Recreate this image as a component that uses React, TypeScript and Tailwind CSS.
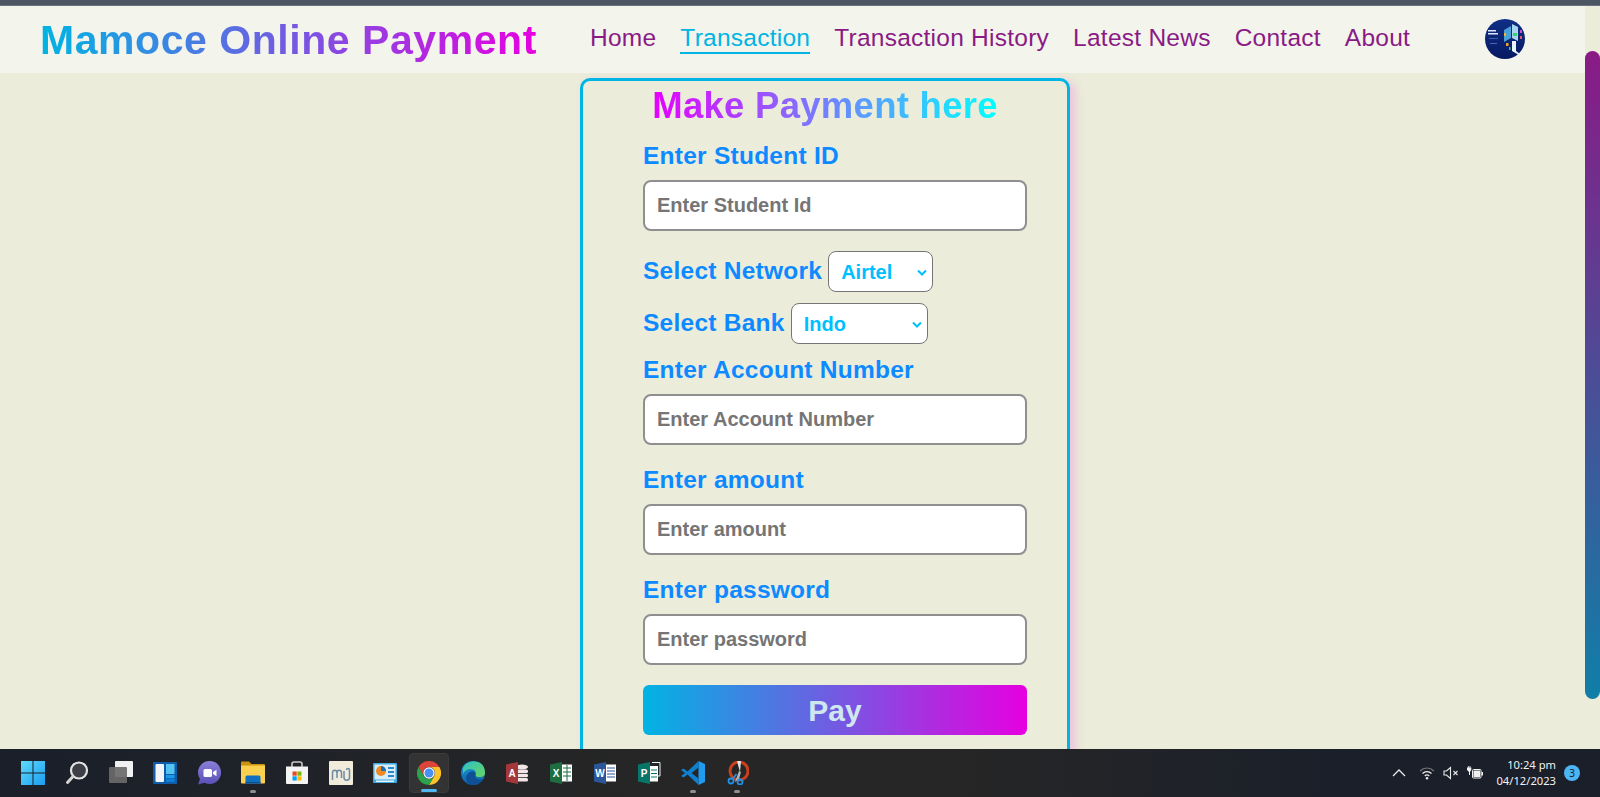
import React from "react";

const sans = "font-['Liberation_Sans',Arial,sans-serif]";

function Field({ label, placeholder, top }: { label: string; placeholder: string; top: string }) {
  return (
    <div className={top}>
      <label className="block h-7 text-[24.5px] leading-7 font-bold tracking-[0.25px] text-[#0d8aff]">{label}</label>
      <input
        readOnly
        placeholder={placeholder}
        className="mt-[10px] block h-[51px] w-[384px] rounded-lg border-2 border-[#8f8f8f] bg-white pl-3 text-xl font-bold outline-none placeholder:text-[#757575]"
      />
    </div>
  );
}

function SelectRow({ label, value, width, top }: { label: string; value: string; width: string; top: string }) {
  return (
    <div className={`flex h-[41px] items-center gap-[6px] ${top}`}>
      <span className="pb-[2px] text-[24.5px] leading-7 font-bold tracking-[0.25px] text-[#0d8aff]">{label}</span>
      <span className={`flex h-[41px] items-center justify-between rounded-lg border border-[#767676] bg-white pr-[4px] pl-3 text-xl font-bold text-[#00bfff] ${width}`}>
        {value}
        <svg width="12" height="12" viewBox="0 0 12 12" fill="none" stroke="#00bfff" strokeWidth="2">
          <path d="M2 4.5 6 8.5 10 4.5" />
        </svg>
      </span>
    </div>
  );
}

const Slot = ({ children, cls = "" }: { children: React.ReactNode; cls?: string }) => (
  <div className={`relative flex h-10 w-10 items-center justify-center rounded ${cls}`}>{children}</div>
);
const Dot = ({ cls = "w-[6px] bg-[#8f8f8f]" }: { cls?: string }) => (
  <span className={`absolute bottom-0 left-1/2 h-[3px] -translate-x-1/2 rounded-full ${cls}`} />
);

const WindowsIcon = () => (
  <svg width="24" height="24" viewBox="0 0 24 24">
    <defs><linearGradient id="w" x1="0" y1="0" x2="1" y2="1"><stop offset="0" stopColor="#5fdcfb" /><stop offset="1" stopColor="#1a9df0" /></linearGradient></defs>
    <path fill="url(#w)" d="M0 0h11.5v11.5H0zM12.5 0H24v11.5H12.5zM0 12.5h11.5V24H0zM12.5 12.5H24V24H12.5z" />
  </svg>
);
const SearchIcon = () => (
  <svg width="24" height="24" viewBox="0 0 24 24" fill="none">
    <circle cx="14" cy="9.5" r="8" fill="#3c3f45" stroke="#e4e4e4" strokeWidth="2.2" />
    <path d="M8 15.5 2.5 21.5" stroke="#d5d5d5" strokeWidth="3" strokeLinecap="round" />
  </svg>
);
const TaskViewIcon = () => (
  <svg width="24" height="24" viewBox="0 0 24 24">
    <rect x="6" y="0" width="18" height="16" rx="1" fill="#f0f0f0" />
    <rect x="0" y="6" width="18" height="16" rx="1" fill="#6a6a6a" fillOpacity="0.92" />
  </svg>
);
const WidgetsIcon = () => (
  <svg width="24" height="24" viewBox="0 0 24 24">
    <rect width="24" height="22" y="1" rx="1" fill="#0f5ca8" />
    <rect x="2.5" y="3" width="8.5" height="18" rx="1" fill="#f2f4f7" />
    <rect x="13" y="3" width="8.5" height="10" fill="#55c3f2" />
    <rect x="13" y="14" width="8.5" height="3" fill="#1a9ae8" />
    <rect x="13" y="17.5" width="8.5" height="3.5" fill="#0f7ed6" />
  </svg>
);
const ChatIcon = () => (
  <svg width="24" height="24" viewBox="0 0 24 24">
    <defs><linearGradient id="c" x1="0" y1="0" x2="0" y2="1"><stop offset="0" stopColor="#8a80d8" /><stop offset="1" stopColor="#5b4fb8" /></linearGradient></defs>
    <path fill="url(#c)" d="M12.5 0a11.5 11.5 0 1 1-5 21.8L1 23.5l2-5.6A11.5 11.5 0 0 1 12.5 0Z" />
    <rect x="6.5" y="8" width="8.5" height="8" rx="1.6" fill="#fff" />
    <path d="m16 11 3.5-2.2v6.400L16 13z" fill="#fff" />
  </svg>
);
const FolderIcon = () => (
  <svg width="24" height="24" viewBox="0 0 24 24">
    <path d="M0 1.500a1 1 0 0 1 1-1h7l2.500 2.500H23a1 1 0 0 1 1 1V8H0z" fill="#c9920f" />
    <path d="M0 4.500h24V21.500a1 1 0 0 1-1 1H1a1 1 0 0 1-1-1z" fill="#fbd04e" />
    <path d="M4.500 16a1.500 1.500 0 0 1 1.500-1.500h12a1.500 1.500 0 0 1 1.500 1.500v6.500h-15z" fill="#0f6fc0" />
    <path d="M4.500 21h15v1.500h-15z" fill="#0a4f94" />
  </svg>
);
const StoreIcon = () => (
  <svg width="24" height="24" viewBox="0 0 24 24">
    <path d="M7 6V3a2 2 0 0 1 2-2h6a2 2 0 0 1 2 2v3" fill="none" stroke="#c9c9c9" strokeWidth="1.6" />
    <path d="M1 5.500h22V22a1 1 0 0 1-1 1H2a1 1 0 0 1-1-1z" fill="#f4f4f4" />
    <path d="M7.500 10.500h4.200v4.200H7.500z" fill="#e8491f" />
    <path d="M12.300 10.500h4.200v4.200h-4.200z" fill="#7db900" />
    <path d="M7.500 15.300h4.200v4.200H7.500z" fill="#00a1f1" />
    <path d="M12.300 15.300h4.200v4.200h-4.200z" fill="#ffb900" />
  </svg>
);
const MuIcon = () => (
  <svg width="24" height="24" viewBox="0 0 24 24" fill="none">
    <rect width="24" height="24" rx="1" fill="#f1ebdc" />
    <path d="M3.500 19v-7c0-3.600 4.500-3.600 4.500 0v5m0-5c0-3.600 4.500-3.600 4.500 0v5" stroke="#6d8ba3" strokeWidth="1.500" />
    <path d="M15 10v6.500c0 3.600 5.500 3.600 5.500 0V9M17.500 9a1.500 1.500 0 1 1 3 0" stroke="#6d8ba3" strokeWidth="1.500" />
  </svg>
);
const PanelIcon = () => (
  <svg width="24" height="24" viewBox="0 0 24 24">
    <rect y="2" width="24" height="20" rx="1" fill="#3fa9e0" />
    <rect x="1.500" y="3.500" width="21" height="15" fill="#d7eef9" />
    <circle cx="8" cy="10" r="5" fill="#f08a24" />
    <path d="M8 10V5a5 5 0 0 1 5 5z" fill="#1f6fb8" />
    <path d="M15 6h6v2h-6zM15 10h6v2h-6zM15 14h6v2h-6z" fill="#2c86c8" />
    <path d="M3 19.500h18V21H3z" fill="#e6f5fc" />
  </svg>
);
const ChromeIcon = () => (
  <svg width="24" height="24" viewBox="0 0 24 24">
    <path d="M1.600 6A12 12 0 0 1 22.400 6H12A6 6 0 0 0 6.800 15z" fill="#e0433a" />
    <path d="M22.400 6A12 12 0 0 1 12 24l5.200-9A6 6 0 0 0 12 6z" fill="#fbc327" />
    <path d="M12 24A12 12 0 0 1 1.600 6l5.200 9A6 6 0 0 0 17.200 15z" fill="#2ba24c" />
    <circle cx="12" cy="12" r="5.700" fill="#fff" />
    <circle cx="12" cy="12" r="4.500" fill="#4a90f0" />
  </svg>
);
const EdgeIcon = () => (
  <svg width="24" height="24" viewBox="0 0 24 24">
    <defs>
      <linearGradient id="e1" x1="0" y1="0" x2="0" y2="1"><stop offset="0" stopColor="#1e9fd8" /><stop offset="1" stopColor="#0c5fa8" /></linearGradient>
      <linearGradient id="e2" x1="0" y1="0" x2="1" y2="1"><stop offset="0" stopColor="#2cc0c8" /><stop offset="1" stopColor="#6ad65c" /></linearGradient>
    </defs>
    <circle cx="12" cy="12" r="12" fill="url(#e1)" />
    <path d="M2 7C5 1 12-.5 17 1s7 6 7 11c0 3-3 4.500-6.500 4-2.500-.4-3.500-1.500-3-2.500 1-2-.5-5.500-4.500-5.500-3 0-6 1-8 5z" fill="url(#e2)" />
    <path d="M10 24c-4-2-6-6-4-10s7-5 8.500-2c.7 1.500-1 3 .5 5 1.500 1.800 4 1.700 7 1-3 5-7.500 7-12 6z" fill="#0e4f96" />
  </svg>
);
const OfficeIcon = ({ color, letter, page }: { color: string; letter: string; page: React.ReactNode }) => (
  <svg width="24" height="24" viewBox="0 0 24 24">
    {page}
    <path d="M1 3.500 13 1v22L1 20.500z" fill={color} />
    <text x="7" y="16" textAnchor="middle" fontSize="10" fontWeight="700" fill="#fff" fontFamily="Liberation Sans">{letter}</text>
  </svg>
);
const VsCodeIcon = () => (
  <svg width="24" height="24" viewBox="0 0 24 24">
    <path d="M17.500 0 24 3v18l-6.500 3V0z" fill="#1f9cf0" />
    <path d="M17.500 0 6.500 10.500 2.500 7.500 0 9l4 3-4 3 2.500 1.500 4-3L17.500 24v-6.500L10.500 12l7-5.500z" fill="#0f7fd0" />
  </svg>
);
const SnipIcon = () => (
  <svg width="24" height="24" viewBox="0 0 24 24" fill="none">
    <circle cx="14" cy="10" r="9" stroke="#c8401c" strokeWidth="3" />
    <path d="M12 0h4l-1 11z" fill="#e3e3e3" />
    <path d="m10 21 4-11 2 1-2 7z" fill="#b5b5b5" />
    <circle cx="6" cy="20" r="2.500" stroke="#1f90e8" strokeWidth="1.800" />
    <circle cx="15" cy="21" r="2.500" stroke="#1f90e8" strokeWidth="1.800" />
    <path d="m7.500 18 4-5" stroke="#1f90e8" strokeWidth="1.800" />
  </svg>
);

const Avatar = () => (
  <svg width="40" height="40" viewBox="0 0 40 40" className="shrink-0">
    <defs><linearGradient id="av" x1="0" y1="0" x2="0" y2="1"><stop offset="0" stopColor="#0f2f86" /><stop offset="1" stopColor="#071a63" /></linearGradient></defs>
    <circle cx="20" cy="20" r="20" fill="url(#av)" />
    <rect x="3" y="11" width="8" height="1.500" fill="#dfe8ff" />
    <rect x="3" y="14" width="10" height="1.500" fill="#dfe8ff" />
    <rect x="4" y="19" width="9" height="1" fill="#3a5cae" />
    <rect x="5" y="24" width="7" height="1" fill="#4467b8" />
    <path d="m19 11 7-4v12l-7 4z" fill="#4aa0d8" />
    <path d="m27 5 6 3v14l-6-3z" fill="#a7d3ef" />
    <rect x="28" y="14" width="4" height="3" fill="#3ecf7a" />
    <rect x="35" y="11" width="2" height="3" fill="#d447c8" />
    <rect x="35" y="17" width="2" height="3" fill="#e8556e" />
    <path d="M27 22h4v10l4 3-1 1-7-4z" fill="#eef4fb" />
    <rect x="19" y="14" width="2" height="3" fill="#f0b429" />
    <rect x="21" y="24" width="2.500" height="3" fill="#f0a12c" />
    <rect x="24" y="28" width="1.500" height="3" fill="#35d07f" />
  </svg>
);

export default function App() {
  return (
    <div className={`flex h-screen w-full flex-col overflow-hidden bg-[#ebecda] ${sans}`}>
      <div className="h-[6px] shrink-0 border-b border-b-[#6b7280] bg-[#4b5563]" />
      <div className="flex min-h-0 flex-1">
        <div className="min-w-0 flex-1">
          <header className="flex h-[67px] items-center bg-[#f3f4ec] pl-10">
            <h1 className="w-[497px] bg-[linear-gradient(to_right,#00b4e3,#e600e0)] bg-clip-text text-[41px] leading-[50px] font-bold tracking-[0.55px] whitespace-nowrap text-transparent">
              Mamoce Online Payment
            </h1>
            <nav className="mb-[2px] ml-[53px] flex w-[820px] items-center gap-6 text-[24.5px] tracking-[0.25px] whitespace-nowrap text-[#8a1a85]">
              <a>Home</a>
              <a className="border-b-2 border-[#00b4e3] leading-[29px] text-[#00b4e3]">Transaction</a>
              <a>Transaction History</a>
              <a>Latest News</a>
              <a>Contact</a>
              <a>About</a>
            </nav>
            <div className="mb-[1px] ml-[75px]"><Avatar /></div>
          </header>
          <main className="mt-[5px] ml-[580px] h-[900px] w-[490px] rounded-t-[10px] border-[3px] border-[#00b4e3] shadow-[5px_3px_10px_rgba(240,100,230,0.3)]">
            <h2 className="mx-auto h-[47px] w-fit bg-[linear-gradient(to_right,#e600ff,#00ffff)] bg-clip-text text-center text-[36.5px] leading-[50px] font-bold tracking-[0.28px] whitespace-nowrap text-transparent">
              Make Payment here
            </h2>
            <form className="ml-[60px] w-[384px]">
              <Field label="Enter Student ID" placeholder="Enter Student Id" top="mt-[14px]" />
              <SelectRow label="Select Network" value="Airtel" width="w-[105px]" top="mt-5" />
              <SelectRow label="Select Bank" value="Indo" width="w-[137px]" top="mt-[11px]" />
              <Field label="Enter Account Number" placeholder="Enter Account Number" top="mt-3" />
              <Field label="Enter amount" placeholder="Enter amount" top="mt-[21px]" />
              <Field label="Enter password" placeholder="Enter password" top="mt-[21px]" />
              <button type="button" className="mt-5 h-[50px] w-[384px] rounded-md bg-[linear-gradient(to_right,#00b4e3,#e600e0)] text-[30px] font-bold text-[#cfe8f0]">
                Pay
              </button>
            </form>
          </main>
        </div>
        <div className="w-[15px] shrink-0 pt-[45px]">
          <div className="h-[648px] rounded-full bg-[linear-gradient(to_bottom,#8a1a85,#0f7fa8)]" />
        </div>
      </div>
      <footer className="flex h-12 shrink-0 items-center bg-[linear-gradient(to_right,#1a1f2a,#262626_40%,#262626_60%,#1a1f2a_85%)] pl-[13px]">
        <div className="flex gap-1">
          <Slot><WindowsIcon /></Slot>
          <Slot><SearchIcon /></Slot>
          <Slot><TaskViewIcon /></Slot>
          <Slot><WidgetsIcon /></Slot>
          <Slot><ChatIcon /></Slot>
          <Slot><FolderIcon /><Dot /></Slot>
          <Slot><StoreIcon /></Slot>
          <Slot><MuIcon /></Slot>
          <Slot><PanelIcon /></Slot>
          <Slot cls="border border-[#3a3a3a] bg-[#333333]"><ChromeIcon /><Dot cls="w-4 bg-[#4fb6f0]" /></Slot>
          <Slot><EdgeIcon /></Slot>
          <Slot>
            <OfficeIcon color="#a4373a" letter="A" page={<g fill="#f4e6e6"><ellipse cx="17" cy="6" rx="6" ry="2.500" /><rect x="11" y="8.500" width="12" height="3.500" rx="1.500" /><rect x="11" y="12.800" width="12" height="3.500" rx="1.500" /><rect x="11" y="17" width="12" height="3.500" rx="1.500" /></g>} />
          </Slot>
          <Slot>
            <OfficeIcon color="#1d6f42" letter="X" page={<g><rect x="11" y="3.500" width="12" height="17" fill="#fff" /><path d="M14 7h8M14 11h8M14 15h8M18 4v16" stroke="#1d6f42" fill="none" /></g>} />
          </Slot>
          <Slot>
            <OfficeIcon color="#2b579a" letter="W" page={<g><rect x="11" y="3.500" width="12" height="17" fill="#fff" /><path d="M14 7h8M14 10h8M14 13h8M14 16h8" stroke="#2b579a" fill="none" /></g>} />
          </Slot>
          <Slot>
            <OfficeIcon color="#077568" letter="P" page={<g><path d="M15 1.500h8V15h-2" stroke="#e8f4f2" fill="none" /><rect x="11" y="5" width="10" height="15.500" fill="#fff" /><path d="M14 9h6M14 12.500h6M14 16h6" stroke="#077568" fill="none" /></g>} />
          </Slot>
          <Slot><VsCodeIcon /><Dot /></Slot>
          <Slot><SnipIcon /><Dot /></Slot>
        </div>
        <div className="ml-auto flex items-center pr-5 text-white">
          <svg width="14" height="8" viewBox="0 0 14 8" fill="none" stroke="#e8e8e8" strokeWidth="1.300"><path d="M1 7 7 1l6 6" /></svg>
          <svg className="ml-[13px]" width="16" height="14" viewBox="0 0 16 14" fill="none">
            <path d="M1 5c4-4 10-4 14 0" stroke="#777" strokeWidth="1.200" />
            <path d="M3.500 7.500c2.500-2.500 6.500-2.500 9 0M5.800 10c1.300-1.300 3.100-1.300 4.400 0" stroke="#eee" strokeWidth="1.300" />
            <circle cx="8" cy="12.300" r="1.200" fill="#eee" />
          </svg>
          <svg className="ml-2" width="16" height="14" viewBox="0 0 16 14" fill="none" stroke="#e8e8e8" strokeWidth="1.100">
            <path d="M1 5h2.500L7.500 1.500v11L3.500 9H1z" />
            <path d="m10.500 5 4 4m0-4-4 4" />
          </svg>
          <svg className="ml-2" width="16" height="14" viewBox="0 0 16 14">
            <path d="M0 1.500h.9V0h.8v1.500h.9V0h.8v1.500h.9v2.500L3 6v3H2V6L0 4z" fill="#f0f0f0" />
            <rect x="5.500" y="3.500" width="8.500" height="8.500" rx="1" fill="none" stroke="#f0f0f0" />
            <rect x="6.500" y="4.500" width="6.500" height="6.500" fill="#f0f0f0" />
            <rect x="14.500" y="6" width="1.500" height="3.500" fill="#f0f0f0" />
          </svg>
          <div className="ml-[13px] text-right font-['Noto_Sans',sans-serif] text-[11.2px] leading-4 text-[#f2f2f2]">
            <div>10:24 pm</div>
            <div>04/12/2023</div>
          </div>
          <span className="ml-2 flex h-4 w-4 items-center justify-center rounded-full bg-[#4cb6f5] font-['Noto_Sans',sans-serif] text-[10px] text-[#14202c]">3</span>
        </div>
      </footer>
    </div>
  );
}
